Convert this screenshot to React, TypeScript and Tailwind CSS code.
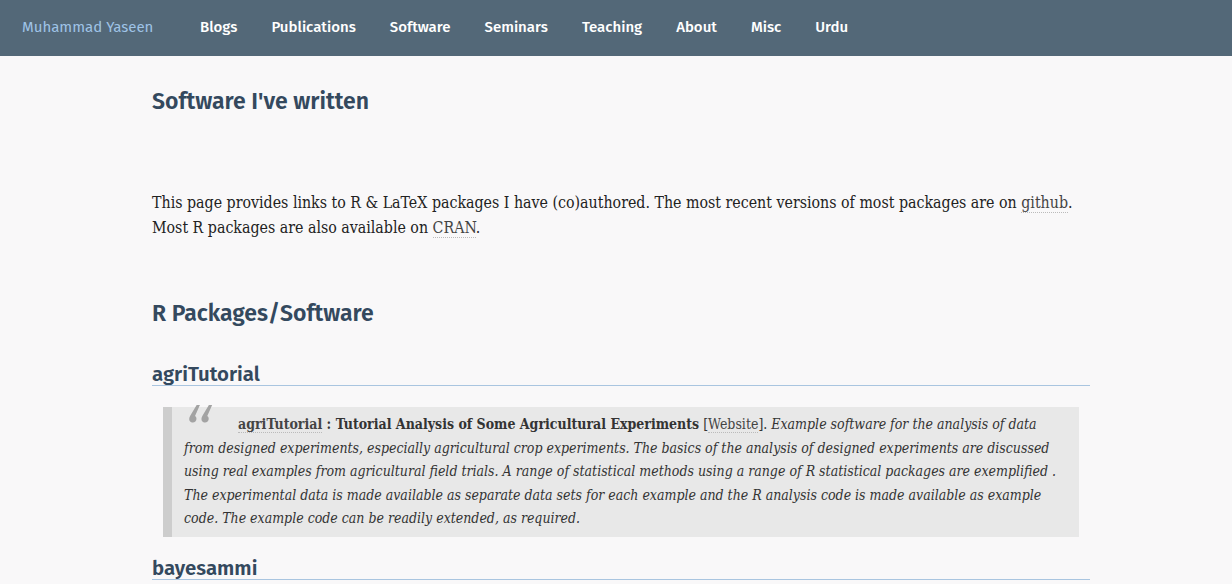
import React from "react";

const nav = ["Blogs", "Publications", "Software", "Seminars", "Teaching", "About", "Misc", "Urdu"];

const sans = "font-['Fira_Sans','Open_Sans','Liberation_Sans',sans-serif]";
const serif = "font-['DejaVu_Serif_Condensed','DejaVu_Serif','Liberation_Serif',serif]";

function Dotted({ children }: { children: React.ReactNode }) {
  return (
    <span className="border-b border-dotted border-[#bbb] text-[#444]">{children}</span>
  );
}

export default function App() {
  return (
    <div className="min-h-[584px] bg-[#f9f8f9] text-[#333]">
      <header className={`h-14 bg-[#536878] flex items-center pb-[2px] ${sans}`}>
        <span className="ml-[22px] w-[178px] text-[15px] text-[#9fc3e6]">Muhammad Yaseen</span>
        <nav className="flex gap-[34px] text-[15px] font-medium text-white">
          {nav.map((n) => (
            <span key={n}>{n}</span>
          ))}
        </nav>
      </header>

      <main className="ml-[152px] w-[938px]">
        <h1 className={`${sans} mt-[28px] text-[23px] font-semibold text-[#34495e]`}>Software I've written</h1>

        <p className={`${serif} mt-[71px] text-[15.8px] leading-[25px] text-[#222]`}>
          This page provides links to R &amp; LaTeX packages I have (co)authored. The most recent versions of most
          packages are on <Dotted>github</Dotted>. Most R packages are also available on <Dotted>CRAN</Dotted>.
        </p>

        <h2 className={`${sans} mt-[56px] text-[23px] font-semibold text-[#34495e]`}>R Packages/Software</h2>

        <h3 className={`${sans} mt-[33px] text-[20.4px] font-semibold text-[#34495e] border-b border-[#a9c5e0] leading-[22px]`}>
          agriTutorial
        </h3>

        <blockquote className={`${serif} relative mt-[21px] ml-[11px] mr-[11px] bg-[#e8e8e8] border-l-[9px] border-[#cdcdcd] pl-[12px] pr-4 pt-[6px] pb-[6px] text-[14px] leading-[23.5px] text-[#333]`}>
          <span className={`${sans} absolute left-[9px] -top-[9px] text-[80px] leading-none italic font-light text-[#a3a3a3]`}>“</span>
          <span className="inline-block w-[54px]" />
          <span className="font-bold not-italic"><Dotted>agriTutorial</Dotted> : Tutorial Analysis of Some Agricultural Experiments</span>{" "}
          [<Dotted>Website</Dotted>].{" "}
          <em>
            Example software for the analysis of data from designed experiments, especially agricultural crop
            experiments. The basics of the analysis of designed experiments are discussed using real examples from
            agricultural field trials. A range of statistical methods using a range of R statistical packages are
            exemplified&nbsp;. The experimental data is made available as separate data sets for each example and the R
            analysis code is made available as example code. The example code can be readily extended, as required.
          </em>
        </blockquote>

        <h3 className={`${sans} mt-[20px] text-[20.4px] font-semibold text-[#34495e] border-b border-[#a9c5e0] leading-[22px]`}>
          bayesammi
        </h3>
      </main>
    </div>
  );
}
